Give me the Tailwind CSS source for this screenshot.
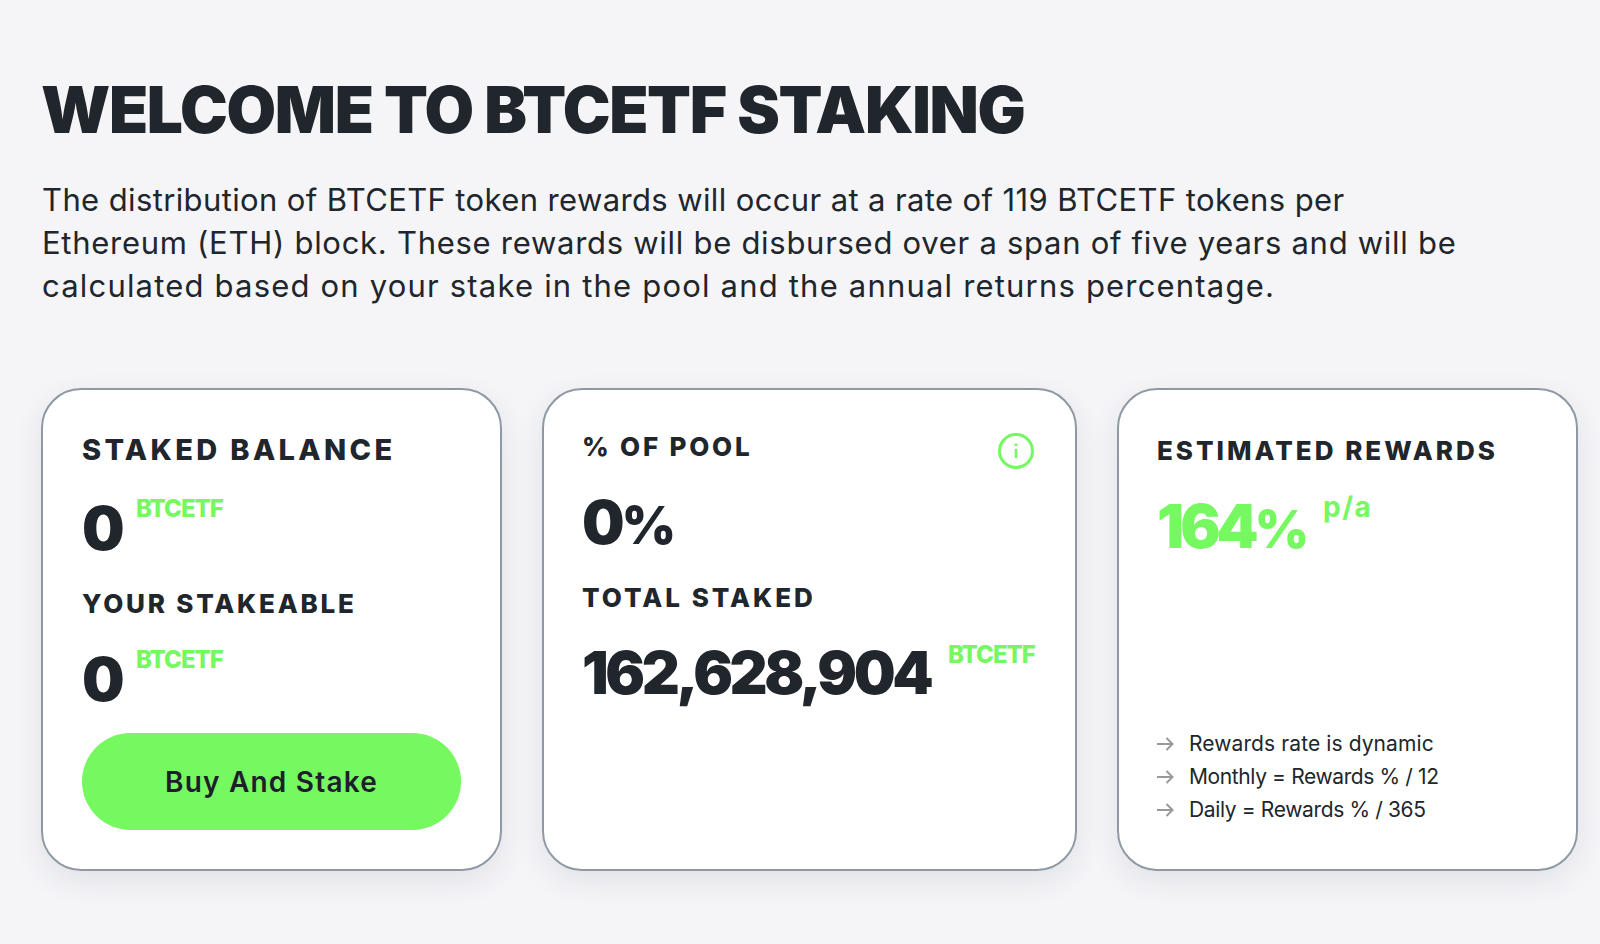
<!DOCTYPE html>
<html lang="en">
<head>
  <meta charset="UTF-8" />
  <meta name="viewport" content="width=device-width, initial-scale=1.0" />
  <title>BTCETF Staking</title>
  <script src="https://cdn.jsdelivr.net/npm/@tailwindcss/browser@4"></script>
</head>
<body class="bg-[#f5f5f8] text-[#20262b] font-['Inter','Liberation_Sans',sans-serif] w-[1600px] h-[944px] overflow-hidden">
  <main class="pl-[41px] pt-[78px]">

    <!-- intro -->
    <h1 class="text-[64px] leading-[64px] font-black tracking-[-1.3px] whitespace-nowrap">WELCOME TO BTCETF STAKING</h1>
    <p class="mt-[36px] ml-px text-[31px] leading-[43px] whitespace-nowrap">
      <span class="block tracking-[0.38px]">The distribution of BTCETF token rewards will occur at a rate of 119 BTCETF tokens per</span>
      <span class="block tracking-[0.72px]">Ethereum (ETH) block. These rewards will be disbursed over a span of five years and will be</span>
      <span class="block tracking-[1.19px]">calculated based on your stake in the pool and the annual returns percentage.</span>
    </p>

    <!-- cards -->
    <div class="mt-[81px] flex gap-[40px]">

      <div class="w-[461px] h-[483px] bg-white rounded-[40px] border-2 border-[#8f99a3] shadow-[0_10px_30px_rgba(30,40,60,0.09)] pl-[39px] pr-[38px] pt-[44px]">
        <div class="text-[29px] leading-[32px] font-extrabold tracking-[3.35px] whitespace-nowrap">STAKED BALANCE</div>
        <div class="mt-[29px] flex items-start h-[66px]">
          <span class="text-[60px] leading-[66px] font-black w-[54px]">0</span>
          <span class="mt-[2px] text-[24px] leading-[24px] font-extrabold text-[#75f860] tracking-[-1px]">BTCETF</span>
        </div>
        <div class="mt-[27px] text-[26px] leading-[32px] font-extrabold tracking-[2.8px] whitespace-nowrap">YOUR STAKEABLE</div>
        <div class="mt-[26px] flex items-start h-[66px]">
          <span class="text-[60px] leading-[66px] font-black w-[54px]">0</span>
          <span class="mt-[2px] text-[24px] leading-[24px] font-extrabold text-[#75f860] tracking-[-1px]">BTCETF</span>
        </div>
        <button class="mt-[21px] w-[379px] h-[97px] rounded-full bg-[#75f860] text-[#1e1f2b] text-[28px] font-semibold tracking-[1.2px]">Buy And Stake</button>
      </div>

      <div class="w-[535px] h-[483px] bg-white rounded-[40px] border-2 border-[#8f99a3] shadow-[0_10px_30px_rgba(30,40,60,0.09)] px-[38px] pt-[41px]">
        <div class="flex justify-between items-start">
          <div class="text-[26px] leading-[32px] font-extrabold tracking-[2.8px] whitespace-nowrap">% OF POOL</div>
          <svg class="mt-[2px] mr-[3px] w-[36px] h-[36px] text-[#75f860]" viewBox="0 0 36 36" fill="none" stroke="currentColor" stroke-width="3">
            <circle cx="18" cy="18" r="16.5" />
            <path d="M18 16v9" stroke-width="2.6" />
            <path d="M18 10.5v2.6" stroke-width="2.6" />
          </svg>
        </div>
        <div class="mt-[20px] text-[60px] leading-[66px] font-black tracking-[-3px]">0<span class="text-[52px]">%</span></div>
        <div class="mt-[23px] text-[26px] leading-[32px] font-extrabold tracking-[3px] whitespace-nowrap">TOTAL STAKED</div>
        <div class="mt-[26px] flex items-start h-[66px]">
          <span class="text-[59px] leading-[66px] font-black tracking-[-3.4px] w-[366px] whitespace-nowrap">162,628,904</span>
          <span class="mt-[3px] text-[24px] leading-[24px] font-extrabold text-[#75f860] tracking-[-1px]">BTCETF</span>
        </div>
      </div>

      <div class="w-[461px] h-[483px] bg-white rounded-[40px] border-2 border-[#8f99a3] shadow-[0_10px_30px_rgba(30,40,60,0.09)] px-[38px] pt-[45px] flex flex-col">
        <div class="text-[26px] leading-[32px] font-extrabold tracking-[3px] whitespace-nowrap">ESTIMATED REWARDS</div>
        <div class="mt-[26px] flex items-start text-[#75f860]">
          <span class="text-[60px] leading-[66px] font-black tracking-[-4px] w-[166px] whitespace-nowrap">164<span class="text-[52px]">%</span></span>
          <span class="text-[28px] leading-[28px] font-bold tracking-[1.5px]">p/a</span>
        </div>
        <ul class="mt-auto mb-[43px] text-[21px] leading-[33px] text-[#20262b]">
          <li class="flex items-center gap-[15px]">
            <svg class="w-[17px] h-[14px]" viewBox="0 0 17 14" fill="none" stroke="#999999" stroke-width="2"><path d="M0 7h15.5M9.5 1l6 6-6 6" /></svg>
            <span class="tracking-[0.1px]">Rewards rate is dynamic</span>
          </li>
          <li class="flex items-center gap-[15px]">
            <svg class="w-[17px] h-[14px]" viewBox="0 0 17 14" fill="none" stroke="#999999" stroke-width="2"><path d="M0 7h15.5M9.5 1l6 6-6 6" /></svg>
            <span class="tracking-[-0.38px]">Monthly = Rewards % / 12</span>
          </li>
          <li class="flex items-center gap-[15px]">
            <svg class="w-[17px] h-[14px]" viewBox="0 0 17 14" fill="none" stroke="#999999" stroke-width="2"><path d="M0 7h15.5M9.5 1l6 6-6 6" /></svg>
            <span class="tracking-[-0.36px]">Daily = Rewards % / 365</span>
          </li>
        </ul>
      </div>

    </div>
  </main>
</body>
</html>
